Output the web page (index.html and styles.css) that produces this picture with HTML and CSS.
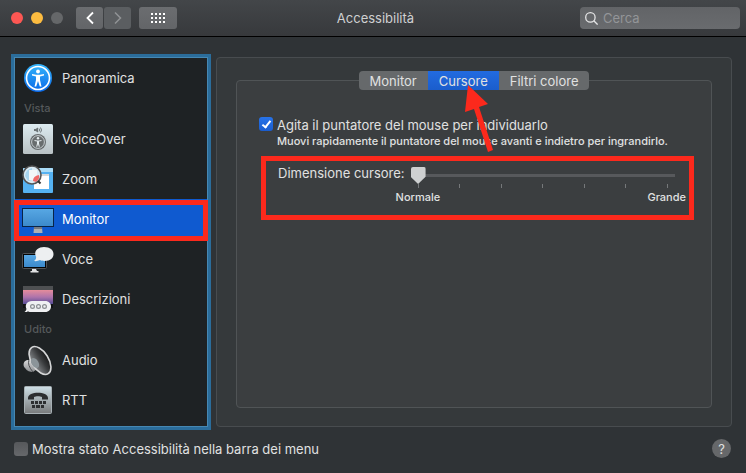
FILE: index.html
```
<!DOCTYPE html>
<html lang="it">
<head>
  <meta charset="UTF-8" />
  <meta name="viewport" content="width=device-width, initial-scale=1.0"/>
  <title>Accessibilità</title>
  <link rel="stylesheet" href="styles.css">
</head>
<body>
  <header class="titlebar">
    <div class="title-left">
      <div class="lights">
        <span class="light close"></span>
        <span class="light minimize"></span>
        <span class="light disabled"></span>
      </div>
      <div class="nav-buttons">
        <button type="button" class="tool-btn" aria-label="Indietro">
          <svg width="8" height="14" viewBox="0 0 8 14"><path d="M7 1.5 1.5 7 7 12.5" fill="none" stroke="#fff" stroke-width="1.8"/></svg>
        </button>
        <button type="button" class="tool-btn" aria-label="Avanti" disabled>
          <svg width="8" height="14" viewBox="0 0 8 14"><path d="M1 1.5 6.5 7 1 12.5" fill="none" stroke="#919395" stroke-width="1.5"/></svg>
        </button>
      </div>
      <button type="button" class="tool-btn grid-btn" aria-label="Mostra tutte">
        <svg width="14" height="10" viewBox="0 0 14 10" fill="#fff">
          <path d="M0 0h2v2H0zM4 0h2v2H4zM8 0h2v2H8zM12 0h2v2h-2zM0 4h2v2H0zM4 4h2v2H4zM8 4h2v2H8zM12 4h2v2h-2zM0 8h2v2H0zM4 8h2v2H4zM8 8h2v2H8zM12 8h2v2h-2z"/>
        </svg>
      </button>
    </div>
    <h1 class="title">Accessibilità</h1>
    <label class="search">
      <svg width="13" height="13" viewBox="0 0 13 13" fill="none" stroke="#e4e4e5" stroke-width="1.3"><circle cx="5.4" cy="5.4" r="4.7"/><path d="m8.8 8.8 3.8 3.8"/></svg>
      <input type="search" placeholder="Cerca" aria-label="Cerca">
    </label>
  </header>

  <main class="content">
    <nav class="sidebar">
      <a href="#panoramica" class="item">
        <svg class="icon" viewBox="0 0 32 32">
          <defs><linearGradient id="blue" x2="0" y2="1"><stop offset="0" stop-color="#35b5fb"/><stop offset="1" stop-color="#0968e8"/></linearGradient></defs>
          <circle cx="16" cy="16" r="14" fill="url(#blue)"/>
          <circle cx="16" cy="16" r="11.5" fill="none" stroke="#fff" stroke-width="1.6"/>
          <circle cx="16" cy="9.5" r="1.9" fill="#fff"/>
          <path d="m10 12 4 .8h4l4-.8v1.5l-4 1V18l1.5 6.5h-1.7L16 19l-1.8 5.5h-1.7L14 18v-3.5l-4-1z" fill="#fff"/>
        </svg>
        Panoramica
      </a>
      <h2 class="group">Vista</h2>
      <a href="#voiceover" class="item">
        <svg class="icon" viewBox="0 0 32 32">
          <defs><linearGradient id="plate" x2="0" y2="1"><stop offset="0" stop-color="#dcebf0"/><stop offset="1" stop-color="#b8c1c4"/></linearGradient></defs>
          <rect x="1" y="1" width="30" height="30" rx="1.5" fill="url(#plate)"/>
          <path d="M12 6h1.5L16 4.5v5L13.5 8H12z" fill="#6c7476"/>
          <path d="M17 5.5q1 1.5 0 3M18.5 4.5q2 2.5 0 5" fill="none" stroke="#6c7476"/>
          <circle cx="16" cy="19" r="8" fill="#686d6e"/>
          <circle cx="16" cy="19" r="6.4" fill="none" stroke="#d1d9dc" stroke-width=".9"/>
          <circle cx="16" cy="15.3" r="1.2" fill="#e5edef"/>
          <path d="m12.5 17 2.5.4h2l2.5-.4v1l-2.5.6v2l.8 3.2h-1L16 21l-.8 2.8h-1l.8-3.2v-2l-2.5-.6z" fill="#e5edef"/>
        </svg>
        VoiceOver
      </a>
      <a href="#zoom" class="item">
        <svg class="icon" viewBox="0 0 32 32">
          <rect x="1" y="5" width="30" height="25" rx="1" fill="#55b2f2"/>
          <path d="M1 6a1 1 0 0 1 1-1h28a1 1 0 0 1 1 1v3H1z" fill="#a9dcf8"/>
          <path d="M12 11h15v15H12z" fill="#fff"/><path d="M12 11h15v2H12z" fill="#d5dadd"/>
          <circle cx="10" cy="12" r="9" fill="#d9ebf5"/>
          <path d="M3 13q1-7 7-8v12l-4 1z" fill="#a7d4ee"/><path d="M7 7h8v10H7z" fill="#f2f6f8"/>
          <path d="M11 18q0-5 6-6 1 4-3 7z" fill="#ef6867"/>
          <circle cx="10" cy="12" r="9" fill="none" stroke="#555" stroke-width="1.6"/>
          <path d="m16 18 2.5 2.5" stroke="#333" stroke-width="2"/>
        </svg>
        Zoom
      </a>
      <a href="#monitor" class="item selected">
        <svg class="icon" viewBox="0 0 32 32">
          <defs><linearGradient id="screen" x2="0" y2="1"><stop offset="0" stop-color="#58a8e4"/><stop offset="1" stop-color="#3b89cb"/></linearGradient></defs>
          <path d="M12 24h8l.5 6h-9z" fill="#adb0b3"/><path d="M12 24h8v2h-8z" fill="#777b80"/>
          <rect x=".5" y="5.5" width="31" height="18" fill="url(#screen)" stroke="#092447"/>
        </svg>
        Monitor
      </a>
      <a href="#voce" class="item">
        <svg class="icon" viewBox="0 0 32 32">
          <rect x=".5" y="10.5" width="24" height="15" rx="1" fill="#050607" stroke="#505356"/>
          <rect x="2" y="12" width="21" height="12" fill="url(#screen)"/>
          <path d="M10 26h4l1 2h1.5v1.5h-8V28H10z" fill="#e1e2e3"/>
          <path d="M14 13.5C11.5 9 15 4 22 4c6 0 9.5 3 9.5 7s-3 7-9 7c-2 0-3-.3-4.500-.9-2 1-4 1.400-6 1 1.500-1 2.500-2.500 2-4.600z" fill="#edeff1"/>
        </svg>
        Voce
      </a>
      <a href="#descrizioni" class="item">
        <svg class="icon" viewBox="0 0 32 32">
          <defs><linearGradient id="dusk" x2="0" y2="1"><stop offset="0" stop-color="#e58c9b"/><stop offset=".5" stop-color="#af74ab"/><stop offset="1" stop-color="#564c95"/></linearGradient></defs>
          <rect x="1" y="3" width="30" height="22" fill="#111214"/>
          <path d="M1 3h30v4H1z" fill="#4e5052"/>
          <path d="M1 7h30v14H1z" fill="url(#dusk)"/>
          <path d="M10 18h13c8 0 8 11 0 11H10c-2 0-3 0-4-.8-1 .8-2 1.100-3.500.8Q4 28 4.500 26C2.500 22 5 18 10 18z" fill="#eff0f2"/>
          <g fill="none" stroke="#8a8d91" stroke-width="1.2"><circle cx="10.5" cy="23.5" r="1.9"/><circle cx="16.5" cy="23.5" r="1.9"/><circle cx="22.5" cy="23.5" r="1.9"/></g>
        </svg>
        Descrizioni
      </a>
      <h2 class="group">Udito</h2>
      <a href="#audio" class="item">
        <svg class="icon" viewBox="0 0 32 32">
          <defs>
            <linearGradient id="cone"><stop offset="0" stop-color="#8a8d90"/><stop offset=".6" stop-color="#3a3c3e"/><stop offset="1" stop-color="#18191a"/></linearGradient>
            <linearGradient id="metal" x2="0" y2="1"><stop offset="0" stop-color="#d9dadb"/><stop offset="1" stop-color="#8b8d90"/></linearGradient>
          </defs>
          <path d="M7 16C2 15 0 21 3 24c2 3 5 4 8 4l4-3-6-9z" fill="url(#metal)"/>
          <path d="M7 16q-2 5 4 12" fill="none" stroke="#4b4d50"/>
          <ellipse cx="18" cy="16.5" rx="8.5" ry="15.5" transform="rotate(-32 18 16.5)" fill="url(#cone)" stroke="#d5d6d7" stroke-width="1.6"/>
          <ellipse cx="13" cy="19" rx="3.5" ry="5.5" transform="rotate(-32 13 19)" fill="#8b9499"/>
        </svg>
        Audio
      </a>
      <a href="#rtt" class="item">
        <svg class="icon" viewBox="0 0 32 32">
          <defs><linearGradient id="steel" x2="0" y2="1"><stop offset="0" stop-color="#cfe0e7"/><stop offset="1" stop-color="#787a7b"/></linearGradient></defs>
          <rect x="2.5" y="2.5" width="27" height="27" rx="1" fill="url(#steel)" stroke="#a7b0b4"/>
          <path d="M6 14c0-7 20-7 20 0v1.500h-6V13c-2-1-6-1-8 0v2.500H6z" fill="#2c2e30"/>
          <path d="M9 17h3v3H9zM13 17h3v3h-3zM17 17h3v3h-3zM21 17h3v3h-3zM10 21h3v3h-3zM14 21h4v3h-4zM19 21h3v3h-3z" fill="#2c2e30"/>
        </svg>
        RTT
      </a>
    </nav>

    <section class="pane">
      <div class="tabs">
        <button type="button">Monitor</button>
        <button type="button" class="active">Cursore</button>
        <button type="button">Filtri colore</button>
      </div>
      <div class="settings">
        <div class="shake">
          <input type="checkbox" id="shake" class="check" checked>
          <div>
            <label for="shake">Agita il puntatore del mouse per individuarlo</label>
            <p class="hint">Muovi rapidamente il puntatore del mouse avanti e indietro per ingrandirlo.</p>
          </div>
        </div>
        <div class="size-row">
          <label for="size">Dimensione cursore:</label>
          <div class="scale">
            <input type="range" id="size" min="0" max="6" value="0">
            <div class="ticks"><i></i><i></i><i></i><i></i><i></i><i></i><i></i></div>
            <div class="scale-labels"><span>Normale</span><span>Grande</span></div>
          </div>
        </div>
      </div>
      <svg class="arrow" width="32" height="70" viewBox="0 0 32 70" fill="#fc291c"><path d="M4 1 24 20l-9 3 14 43-5 2-14-43-9 3z"/></svg>
    </section>
  </main>

  <footer class="footer">
    <label class="status"><input type="checkbox" class="check">Mostra stato Accessibilità nella barra dei menu</label>
    <button type="button" class="help" aria-label="Aiuto">?</button>
  </footer>
</body>
</html>
```
FILE: styles.css
```
* { box-sizing: border-box; }
body {
  margin: 0;
  min-height: 100vh;
  background: #2f3336;
  color: #e0e1e1;
  font-family: Inter, "Liberation Sans", sans-serif;
  font-size: 13px;
  line-height: 16px;
}
button, input { font: inherit; color: inherit; margin: 0; }
button { border: none; padding: 0; }
svg { display: block; flex: none; }

/* title bar */
.titlebar {
  display: grid;
  grid-template-columns: 1fr auto 1fr;
  align-items: center;
  height: 37px;
  padding: 0 6px 0 11px;
  background: linear-gradient(#434649, #37393c);
  border-bottom: 1px solid #000;
}
.title-left { display: flex; align-items: center; }
.lights { display: flex; gap: 8px; margin-right: 13px; }
.light { width: 12px; height: 12px; border-radius: 50%; }
.close { background: #fc5753; }
.minimize { background: #fdbc40; }
.disabled { background: #656769; }
.nav-buttons { display: flex; gap: 1px; margin-right: 8px; }
.tool-btn {
  display: flex;
  align-items: center;
  justify-content: center;
  width: 27px;
  height: 22px;
  border-radius: 3px;
  background: linear-gradient(#6b6d70, #636568);
}
.tool-btn:disabled { background: #5b5e61; }
.grid-btn { width: 38px; }
.title { margin: 0; font-size: 13px; font-weight: 400; color: #cfd0d1; }
.search {
  display: flex;
  align-items: center;
  justify-self: end;
  gap: 5px;
  width: 160px;
  height: 22px;
  padding: 0 5px;
  border-radius: 4px;
  background: linear-gradient(#626467, #696b6e);
}
.search input {
  width: 100%;
  padding: 0;
  border: none;
  outline: none;
  background: none;
}
.search input::placeholder { color: #939598; }

/* sidebar */
.content { display: flex; gap: 5px; padding: 17px 14px 0 11px; }
.sidebar {
  flex: none;
  width: 194px;
  margin: 3px;
  padding-bottom: 6px;
  border: 1px solid #4688b3;
  box-shadow: 0 0 0 3px #2b6d9b;
  background: #1e2224;
}
.item {
  position: relative;
  display: flex;
  align-items: center;
  gap: 8px;
  height: 40px;
  padding: 0 0 1px 7px;
  color: #e0e1e1;
  text-decoration: none;
}
.icon { width: 32px; height: 32px; }
.group {
  margin: 0;
  padding-left: 9px;
  font-size: 11px;
  font-weight: 500;
  line-height: 21px;
  color: #55595b;
}
.selected { background: #0f5ad0; color: #fff; }
.selected::after {
  content: "";
  position: absolute;
  inset: 1px -1px -2px;
  z-index: 1;
  border: 5px solid #fc291c;
}

/* pane */
.pane {
  position: relative;
  display: flex;
  flex: 1;
  flex-direction: column;
  margin: 3px 0;
  padding: 13px 19px 18px;
  border: 1px solid #484c4f;
  border-radius: 4px;
  background: #35393b;
}
.tabs {
  position: relative;
  display: flex;
  align-self: center;
  border-radius: 4px;
  overflow: hidden;
  background: #66696b;
}
.tabs button {
  height: 19px;
  padding: 0 11px;
  background: none;
}
.tabs .active { background: linear-gradient(#226be0, #1a5dcc); }
.settings {
  flex: 1;
  margin-top: -10px;
  padding: 36px 17px 0 22px;
  border: 1px solid #505456;
  border-radius: 4px;
  background: #3b3e40;
}
.check {
  appearance: none;
  display: grid;
  place-items: center;
  flex: none;
  width: 14px;
  height: 14px;
  border-radius: 3px;
  background: linear-gradient(#56585b, #66686b);
}
.check:checked {
  background: linear-gradient(#2773e9, #1a5dcf);
}
.check:checked::after {
  content: "";
  width: 3px;
  height: 7px;
  margin-bottom: 2px;
  border: solid #fff;
  border-width: 0 2px 2px 0;
  transform: rotate(38deg);
}
.shake { display: flex; gap: 4px; }
.shake label { display: block; }
.hint { margin: 0; font-size: 11px; font-weight: 500; white-space: nowrap; }
.size-row {
  display: flex;
  gap: 6px;
  height: 64px;
  margin: 7px 0 0 2px;
  padding: 4px 14px 0 12px;
  border: 5px solid #fc291c;
}
.size-row label { white-space: nowrap; }
.scale { flex: 1; }
.scale input {
  appearance: none;
  display: block;
  width: 100%;
  height: 17px;
  margin-top: 2px;
  background: linear-gradient(#57595c, #57595c) center / 100% 3px no-repeat;
}
.scale input::-webkit-slider-thumb {
  appearance: none;
  width: 15px;
  height: 17px;
  border-radius: 2px;
  background: #ced0d1;
  clip-path: polygon(0 0, 100% 0, 100% 58%, 50% 100%, 0 58%);
}
.ticks { display: flex; justify-content: space-between; padding: 0 7px; }
.ticks i { width: 1px; height: 4px; background: #75787a; }
.scale-labels {
  display: flex;
  justify-content: space-between;
  margin: 1px -11px 0 -15px;
  font-size: 11px;
  font-weight: 500;
}
.arrow { position: absolute; top: 26px; left: 247px; }

/* footer */
.footer {
  display: flex;
  align-items: center;
  justify-content: space-between;
  padding: 9px 15px 14px 14px;
}
.status { display: flex; align-items: center; gap: 4px; }
.help {
  width: 19px;
  height: 19px;
  border-radius: 50%;
  background: #66686a;
}
```
